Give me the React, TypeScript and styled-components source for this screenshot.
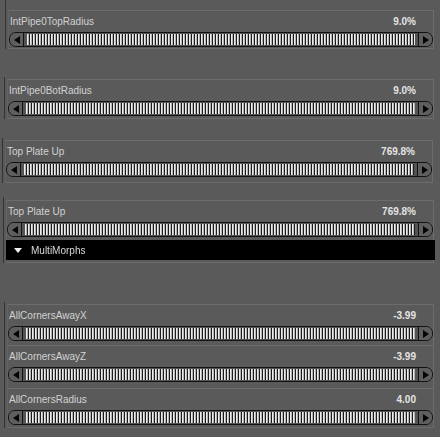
import styled, { createGlobalStyle } from "styled-components"

const GlobalStyle = createGlobalStyle`
  html, body {
    margin: 0;
    background: #5a5a5a;
  }
  body {
    width: 440px;
    height: 437px;
    overflow: hidden;
    font-family: "Liberation Sans", Arial, sans-serif;
  }
`

const Page = styled.div`
  width: 434px;
  display: flex;
  flex-direction: column;
`

const Group = styled.div<{ $top: number; $pad: number; $left: number; $right?: number }>`
  margin-top: ${(p) => p.$top}px;
  margin-left: ${(p) => p.$left}px;
  margin-right: ${(p) => p.$right ?? 0}px;
  padding-top: ${(p) => p.$pad}px;
  padding-left: 2px;
  border-left: 1px solid #343434;
  display: flex;
  flex-direction: column;
`

const Panel = styled.div`
  border: 1px solid #6c6c6c;
  border-left-color: #636363;
  display: flex;
  flex-direction: column;
`

const Row = styled.div<{ $pad: number; $divider?: boolean }>`
  display: flex;
  flex-direction: column;
  padding-bottom: ${(p) => p.$pad}px;
  border-top: ${(p) => (p.$divider ? "1px solid #6c6c6c" : "none")};
`

const LabelLine = styled.div`
  height: 21px;
  display: flex;
  align-items: center;
  justify-content: space-between;
  padding: 0 17px 0 1px;
  font-size: 10px;
`

const Label = styled.span`
  color: #d2d2d2;
`

const Value = styled.span`
  color: #e4e4e4;
  font-weight: bold;
`

const Slider = styled.div`
  height: 15px;
  box-sizing: border-box;
  border: 1px solid #121212;
  border-radius: 7px;
  background: #545454;
  display: flex;
  align-items: stretch;
`

const Cap = styled.div<{ $side: "left" | "right" }>`
  width: 13px;
  flex: none;
  display: flex;
  align-items: center;
  justify-content: center;
  background: #5e5e5e;
  border-radius: ${(p) => (p.$side === "left" ? "6px 0 0 6px" : "0 6px 6px 0")};
  ${(p) => (p.$side === "left" ? "border-right" : "border-left")}: 1px solid #121212;
`

const Track = styled.div`
  flex: 1;
  margin: 1px 3px;
  background: repeating-linear-gradient(
    90deg,
    #ececec 0 1px,
    #b4b4b4 1px 2px,
    #1c1c1c 2px 3px
  );
`

const GroupBar = styled.div`
  height: 20px;
  margin: 0 -2px 0 -1px;
  background: #000;
  display: flex;
  align-items: center;
  gap: 9px;
  padding-left: 8px;
  font-size: 10px;
`

const GroupTitle = styled.span`
  color: #d8d8d8;
  will-change: transform;
`

const Arrow = ({ dir }: { dir: "left" | "right" }) => (
  <svg width="6" height="8" viewBox="0 0 6 8">
    <path d={dir === "left" ? "M6 0 L0 4 L6 8 Z" : "M0 0 L6 4 L0 8 Z"} fill="#050505" />
  </svg>
)

const Property = ({ label, value, pad, divider }: { label: string; value: string; pad: number; divider?: boolean }) => (
  <Row $pad={pad} $divider={divider}>
    <LabelLine>
      <Label>{label}</Label>
      <Value>{value}</Value>
    </LabelLine>
    <Slider>
      <Cap $side="left">
        <Arrow dir="left" />
      </Cap>
      <Track />
      <Cap $side="right">
        <Arrow dir="right" />
      </Cap>
    </Slider>
  </Row>
)

export default function App() {
  return (
    <>
      <GlobalStyle />
      <Page>
        <Group $top={0} $pad={10} $left={5}>
          <Panel>
            <Property label="IntPipe0TopRadius" value="9.0%" pad={1} />
          </Panel>
        </Group>
        <Group $top={28} $pad={2} $left={4}>
          <Panel>
            <Property label="IntPipe0BotRadius" value="9.0%" pad={2} />
          </Panel>
        </Group>
        <Group $top={19} $pad={2} $left={2} $right={1}>
          <Panel>
            <Property label="Top Plate Up" value="769.8%" pad={5} />
          </Panel>
        </Group>
        <Group $top={14} $pad={3} $left={3}>
          <Panel>
            <Property label="Top Plate Up" value="769.8%" pad={3} />
            <GroupBar>
              <svg width="8" height="5" viewBox="0 0 8 5">
                <path d="M0 0 L8 0 L4 5 Z" fill="#f0f0f0" />
              </svg>
              <GroupTitle>MultiMorphs</GroupTitle>
            </GroupBar>
            <Row $pad={2} />
          </Panel>
        </Group>
        <Group $top={39} $pad={2} $left={4}>
          <Panel>
            <Property label="AllCornersAwayX" value="-3.99" pad={4} />
            <Property label="AllCornersAwayZ" value="-3.99" pad={6} divider />
            <Property label="AllCornersRadius" value="4.00" pad={2} divider />
          </Panel>
        </Group>
      </Page>
    </>
  )
}
